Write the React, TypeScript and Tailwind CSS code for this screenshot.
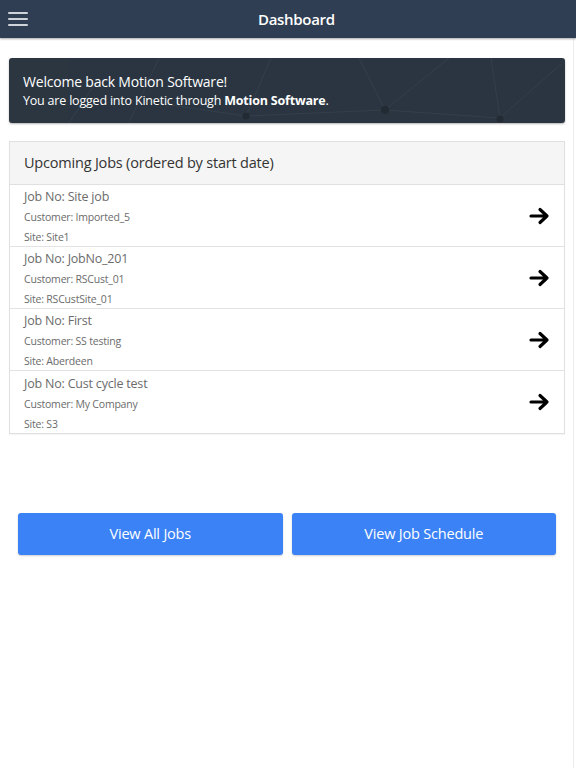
import React from 'react';

const jobs = [
  { no: 'Site job', customer: 'Imported_5', site: 'Site1' },
  { no: 'JobNo_201', customer: 'RSCust_01', site: 'RSCustSite_01' },
  { no: 'First', customer: 'SS testing', site: 'Aberdeen' },
  { no: 'Cust cycle test', customer: 'My Company', site: 'S3' },
];

const ArrowRight = () => (
  <svg width="22" height="18" viewBox="0 0 22 18" fill="none">
    <path d="M2 9h16M11 2.5l7 6.5-7 6.5" stroke="#000" strokeWidth="3.2" strokeLinecap="round" strokeLinejoin="round" />
  </svg>
);

// faint network drawing behind the welcome text
const NetworkBg = () => (
  <svg className="absolute inset-0 h-full w-full" viewBox="0 0 556 65" preserveAspectRatio="none">
    <g stroke="#36434f" strokeWidth="1" opacity="0.8">
      <line x1="120" y1="65" x2="150" y2="0" />
      <line x1="147" y1="45" x2="237" y2="58" />
      <line x1="237" y1="58" x2="376" y2="52" />
      <line x1="376" y1="52" x2="350" y2="0" />
      <line x1="376" y1="52" x2="440" y2="0" />
      <line x1="376" y1="52" x2="491" y2="60" />
      <line x1="491" y1="60" x2="482" y2="0" />
      <line x1="491" y1="60" x2="552" y2="6" />
      <line x1="237" y1="58" x2="262" y2="0" />
      <line x1="60" y1="65" x2="90" y2="20" />
    </g>
    <g fill="#222b33">
      <circle cx="237" cy="58" r="3.5" />
      <circle cx="376" cy="52" r="4" />
      <circle cx="491" cy="61" r="3.5" />
      <circle cx="147" cy="45" r="2.5" />
    </g>
  </svg>
);

export default function App() {
  return (
    <div className="relative min-h-[768px] bg-white" style={{ fontFamily: '"Open Sans", "Noto Sans", sans-serif' }}>
      <div className="absolute right-[2px] top-[38px] bottom-0 w-px bg-[#ececec]" />
      <header className="relative flex h-[38px] items-center bg-[#2f3e52] shadow-[0_1px_2px_rgba(0,0,0,0.35)]">
        <button className="ml-[8px] flex w-[20px] flex-col gap-[4px]">
          <span className="block h-[2px] w-full rounded bg-[#cfd4da]" />
          <span className="block h-[2px] w-full rounded bg-[#cfd4da]" />
          <span className="block h-[2px] w-full rounded bg-[#cfd4da]" />
        </button>
        <h1 className="absolute left-[258px] text-[15px] font-semibold tracking-[-0.3px] text-white">Dashboard</h1>
      </header>

      <main className="pl-[9px] pr-[11px] pt-[20px]">
        <div className="relative h-[65px] overflow-hidden rounded-[3px] bg-[#2b3641] shadow-[0_1px_2px_rgba(0,0,0,0.3)]">
          <NetworkBg />
          <div className="relative px-[14px] pt-[14px] text-white">
            <p className="text-[14px] leading-[20px] tracking-[-0.2px]">Welcome back Motion Software!</p>
            <p className="text-[12.5px] leading-[18px] tracking-[-0.2px]">
              You are logged into Kinetic through <b className="font-bold">Motion Software</b>.
            </p>
          </div>
        </div>

        <div className="mt-[18px] border border-[#e0e0e0] shadow-[0_1px_1px_rgba(0,0,0,0.04)]">
          <div className="flex h-[43px] items-center border-b border-[#e0e0e0] bg-[#f5f5f5] px-[14px]">
            <h2 className="text-[14.5px] font-medium tracking-[-0.2px] text-[#333]">Upcoming Jobs (ordered by start date)</h2>
          </div>
          {jobs.map((job, i) => (
            <div
              key={job.no}
              className={`flex h-[62px] items-center justify-between pl-[14px] pr-[13px] ${i < jobs.length - 1 ? 'border-b border-[#e3e3e3]' : ''}`}
            >
              <div className="flex flex-col pt-[3px] text-[#6b6b6b]">
                <span className="text-[12.5px] leading-[20px] tracking-[-0.2px]">Job No: {job.no}</span>
                <span className="text-[10.5px] leading-[20px] tracking-[-0.2px]">Customer: {job.customer}</span>
                <span className="text-[10.5px] leading-[20px] tracking-[-0.2px]">Site: {job.site}</span>
              </div>
              <ArrowRight />
            </div>
          ))}
        </div>
      </main>

      <div className="mt-[79px] grid grid-cols-2 gap-[9px] pl-[18px] pr-[20px]">
        <button className="h-[42px] rounded-[3px] bg-[#3b82f6] text-[14.5px] tracking-[-0.2px] text-white shadow-[0_1px_2px_rgba(0,0,0,0.2)]">
          View All Jobs
        </button>
        <button className="h-[42px] rounded-[3px] bg-[#3b82f6] text-[14.5px] tracking-[-0.2px] text-white shadow-[0_1px_2px_rgba(0,0,0,0.2)]">
          View Job Schedule
        </button>
      </div>
    </div>
  );
}
